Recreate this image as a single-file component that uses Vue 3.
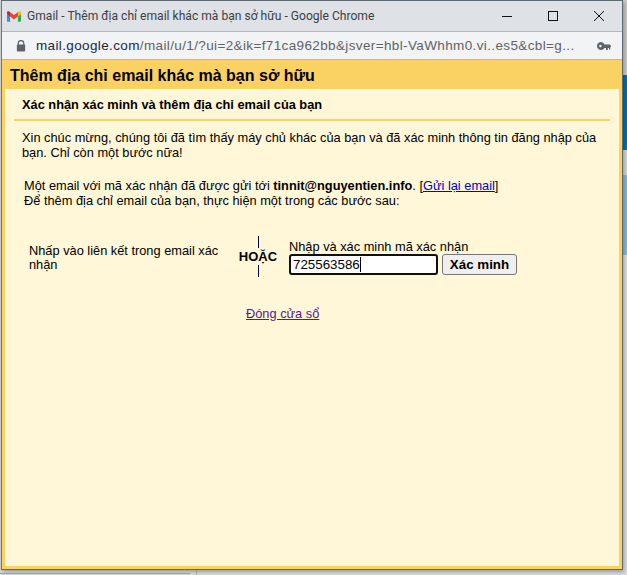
<script setup>
const code = '725563586'
</script>

<template>
  <div class="page">
    <div class="window">
      <header class="titlebar">
        <svg class="gmail" viewBox="0 0 16 12" width="14" height="11">
          <path d="M0 3V11a1 1 0 0 0 1 1H3.500V5.500Z" fill="#4285f4" />
          <path d="M16 3V11a1 1 0 0 1-1 1H12.500V5.500Z" fill="#34a853" />
          <path d="M3.500 6V1L8 4.400 12.500 1V6L8 9.400Z" fill="#ea4335" />
          <path d="M0 3V1.600C0 .3 1.500-.4 2.500.4L3.500 1V6Z" fill="#c5221f" />
          <path d="M16 3V1.600C16 .3 14.500-.4 13.500.4L12.500 1V6Z" fill="#fbbc04" />
        </svg>
        <span class="wintitle">Gmail - Thêm địa chỉ email khác mà bạn sở hữu - Google Chrome</span>
        <div class="controls">
          <svg width="12" height="12" viewBox="0 0 12 12"><path d="M1 6.500H11" stroke="#111" fill="none" /></svg>
          <svg width="12" height="12" viewBox="0 0 12 12"><rect x="1.500" y="1.500" width="9" height="9" stroke="#111" fill="none" /></svg>
          <svg width="12" height="12" viewBox="0 0 12 12"><path d="M1 1L11 11M11 1L1 11" stroke="#111" fill="none" /></svg>
        </div>
      </header>
      <div class="urlbar">
        <svg class="lock" width="10" height="12" viewBox="0 0 10 13">
          <path d="M2 5.500V3.600a3 3 0 0 1 6 0V5.500" stroke="#5f6368" stroke-width="1.400" fill="none" />
          <rect x="0.500" y="5" width="9" height="7.500" rx="1" fill="#5f6368" />
        </svg>
        <span class="url"><span class="host">mail.google.com</span>/mail/u/1/?ui=2&amp;ik=f71ca962bb&amp;jsver=hbl-VaWhhm0.vi..es5&amp;cbl=g...</span>
        <svg class="key" width="14" height="8" viewBox="0 0 14 8">
          <path d="M4 0a4 4 0 1 0 3.500 6H9V8h1.800V6H12v1.600h1.200V6L14 4l-1-1.600H7.500A4 4 0 0 0 4 0Z" fill="#5f6368" />
          <circle cx="3.400" cy="4" r="1.200" fill="#f1f3f4" />
        </svg>
      </div>
      <section class="dialog">
        <h1 class="dialog-title">Thêm địa chỉ email khác mà bạn sở hữu</h1>
        <div class="panel">
          <h2 class="step-title">Xác nhận xác minh và thêm địa chỉ email của bạn</h2>
          <p class="congrats">Xin chúc mừng, chúng tôi đã tìm thấy máy chủ khác của bạn và đã xác minh thông tin đăng nhập của bạn. Chỉ còn một bước nữa!</p>
          <p class="sent">
            Một email với mã xác nhận đã được gửi tới <b>tinnit@nguyentien.info</b>. [<a href="#" class="blue">Gửi lại email</a>]<br />
            Để thêm địa chỉ email của bạn, thực hiện một trong các bước sau:
          </p>
          <div class="options">
            <div class="opt-link">Nhấp vào liên kết trong email xác nhận</div>
            <div class="or">
              <span class="bar"></span>
              <b class="or-text">HOẶC</b>
              <span class="bar"></span>
            </div>
            <div class="opt-code">
              <label class="code-label" for="code">Nhập và xác minh mã xác nhận</label>
              <div class="code-row">
                <div id="code" class="code-input">{{ code }}<i class="caret"></i></div>
                <button class="verify" type="button">Xác minh</button>
              </div>
            </div>
          </div>
          <div class="close-row"><a href="#" class="close">Đóng cửa sổ</a></div>
        </div>
      </section>
    </div>
  </div>
</template>

<style scoped>
.page {
  width: 627px;
  height: 575px;
  overflow: hidden;
  font-family: "Liberation Sans", Arial, sans-serif;
  background:
    linear-gradient(#a8a8a8, #a8a8a8) 0 573px / 190px 1px no-repeat,
    linear-gradient(#b8b8b8, #b8b8b8) 196px 570px / 1px 5px no-repeat,
    linear-gradient(#c8c8c8 0, #c8c8c8 75px, #0b6ca6 75px, #0b6ca6 150px, #d4d4d4 150px, #d4d4d4 175px, #8fb6cc 175px, #8fb6cc 255px, #dcdcdc 255px) right top / 4px 100% no-repeat,
    #dcdcdc;
  box-sizing: border-box;
  padding-left: 1px;
}
.window {
  width: 622px;
  height: 570px;
  box-sizing: border-box;
  border: 1px solid #5f6b72;
  border-left-color: #6f7478;
  display: flex;
  flex-direction: column;
  box-shadow: 1px 2px 4px rgba(0, 0, 0, 0.3);
}
.titlebar {
  height: 30px;
  flex: none;
  background: #dee1e6;
  display: flex;
  align-items: center;
  padding-left: 5px;
  color: #3c4043;
}
.gmail { flex: none; margin-right: 6px; }
.wintitle {
  flex: 1;
  white-space: nowrap;
  font-family: Roboto, "Liberation Sans", sans-serif;
  font-size: 12.100px;
}
.controls { display: flex; gap: 34px; padding-right: 17px; }
.urlbar {
  height: 27px;
  flex: none;
  background: #f1f3f4;
  border-top: 1px solid #b4b7ba;
  border-bottom: 1px solid #b4b7ba;
  display: flex;
  align-items: center;
  padding-left: 14px;
  color: #5f6368;
  font-size: 13.500px;
}
.lock { flex: none; margin-right: 10px; }
.url { flex: 1; white-space: nowrap; letter-spacing: 0.37px; }
.host { color: #202a44; }
.key { flex: none; margin-right: 11px; }
.dialog {
  flex: 1;
  min-height: 0;
  background: #fad163;
  padding: 0 3px 3px 3px;
  display: flex;
  flex-direction: column;
  color: #000;
}
.dialog-title {
  margin: 0;
  height: 29px;
  line-height: 31px;
  font-size: 16px;
  font-weight: bold;
  padding-left: 5px;
  flex: none;
}
.panel {
  flex: 1;
  background: #fff7d7;
  padding: 8px 9px 0 9px;
  font-size: 12.800px;
}
.step-title {
  margin: 0;
  padding: 0 0 7px 8px;
  font-size: 12.800px;
  line-height: 15px;
  font-weight: bold;
  border-bottom: 2px solid #fad163;
}
.congrats {
  margin: 0;
  padding: 9px 0 0 8px;
  line-height: 15px;
  width: 598px;
  box-sizing: border-box;
}
.sent {
  margin: 0;
  padding: 18px 0 0 10px;
  line-height: 15px;
}
.blue { color: #00c; }
.options {
  display: flex;
  align-items: flex-start;
  margin-top: 27px;
  margin-left: 15px;
}
.opt-link { width: 204px; line-height: 14px; padding-top: 9px; flex: none; }
.or {
  width: 36px;
  margin-left: 7px;
  margin-right: 13px;
  padding-top: 1px;
  flex: none;
  display: flex;
  flex-direction: column;
  align-items: center;
  font-size: 13px;
  line-height: 15px;
}
.bar { width: 1px; height: 12px; background: #00084a; flex: none; }
.or-text { display: block; margin: 0; padding: 1px 0; }
.opt-code { padding-top: 5px; }
.code-label { display: block; line-height: 14px; }
.code-row { display: flex; gap: 4px; align-items: center; }
.code-input {
  width: 149px;
  height: 21px;
  box-sizing: border-box;
  border: 2px solid #101010;
  border-radius: 3px;
  background: #fff;
  padding-left: 2px;
  line-height: 17px;
  font-size: 13.330px;
  display: flex;
  align-items: center;
}
.caret { display: inline-block; width: 1px; height: 15px; background: #000; }
.verify {
  width: 75px;
  height: 21px;
  padding: 0;
  box-sizing: border-box;
  font: bold 13.330px "Liberation Sans", sans-serif;
  background: #efefef;
  border: 1px solid #767676;
  border-radius: 3px;
  color: #000;
}
.close-row { padding-top: 29px; padding-left: 232px; line-height: 15px; }
.close { color: #551a8b; }
</style>

<style>
html, body { margin: 0; padding: 0; }
</style>
